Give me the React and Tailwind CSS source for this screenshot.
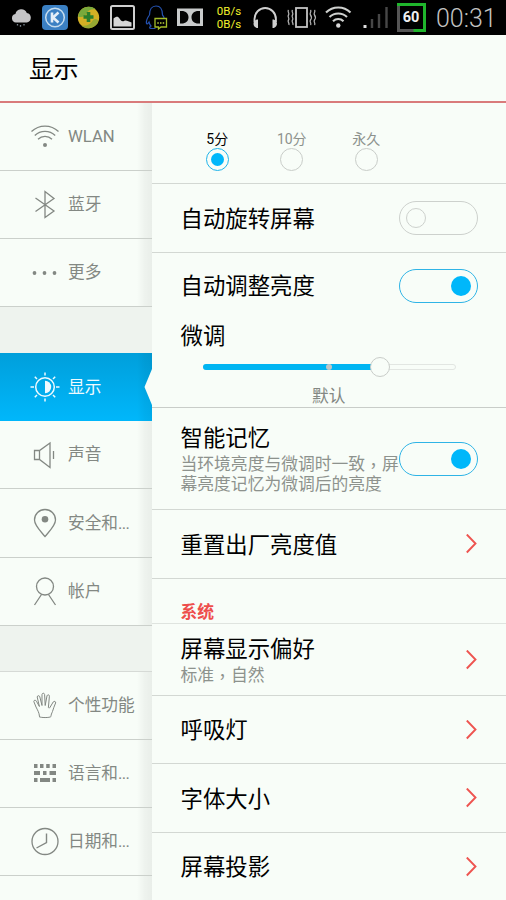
import React, { useState } from 'react';
import clsx from 'clsx';

// ─────────────────────────────────────────────
//  Status bar
// ─────────────────────────────────────────────
// Every glyph is drawn on the bar's own coordinates, the viewBox cuts out its cell
const Cell = ({ x, w, children }) => (
  <svg width={w} height="35" viewBox={`${x} 0 ${w} 35`} fill="none" className="shrink-0">
    {children}
  </svg>
);

const StatusBar = () => (
  <div className="h-[35px] bg-black flex items-center overflow-hidden">
    <Cell x={0} w={37}>
      <path d="M16 22.5a4.3 4.3 0 0 1-.6-8.5 6 6 0 0 1 11.4-1.1 4.9 4.9 0 0 1 .2 9.600z" fill="#c4c4c6" />
      <path d="M17.5 24v1.6M20.5 25v1.8M24 24v1.6" stroke="#7c8791" strokeWidth="1.3" />
    </Cell>
    <Cell x={37} w={36}>
      <rect x="42" y="5" width="26" height="25" rx="4" fill="#3b80c3" />
      <circle cx="55" cy="17.5" r="9.3" stroke="#c5dcee" strokeWidth="1.5" />
      <path d="M52 12.5v10M58.500 12.500l-5.500 5 5.500 5" stroke="#e5eff8" strokeWidth="2.600" />
    </Cell>
    <Cell x={73} w={32}>
      <circle cx="88.500" cy="17.500" r="10.700" fill="#d4b025" />
      <path d="M79 13a10.700 10.700 0 0 1 17-3.500c-5-1-8 1-9.500 4s-4.500 4.500-8.500 3z" fill="#79a93c" />
      <path d="M98 22a10.700 10.700 0 0 1-17 3.500c5 1 9-1 11-4s3.500-3 6-1.500z" fill="#96a832" />
      <path d="M88.500 12v10M83.500 17h10" stroke="#2b7f2c" strokeWidth="3.600" />
    </Cell>
    <Cell x={105} w={35}>
      <rect x="111" y="6" width="23" height="23" rx="1.5" stroke="#cfcfcf" strokeWidth="2" />
      <path d="M113.500 26.500v-8c2.500-2 4.500-2.500 6 0 1.200 2 2.500 3.500 4.500 2.500 2.500-1.200 4 .5 7.500 1.500v4z" fill="#d6d6d6" />
    </Cell>
    <Cell x={140} w={32}>
      <path d="M149.500 15c0-5.500 2.500-9 6.500-9s6.500 3.500 6.500 9c1 1 1.500 2 1.800 3.500M149.500 15c-2 2.500-3.500 6-3 8.500.5 1 1.500 0 2.500-1.500.5 2 1 3 2 4-1.500.8-2.500 2.500 1 2.500h3.500" stroke="#2451b0" strokeWidth="1.200" />
      <path d="M155 18.500h11.500v8.500h-5.500l-2.500 2v-2H155z" stroke="#a4bd29" strokeWidth="1.300" />
      <path d="M157.300 23h1.500M160 23h1.500M162.700 23h1.500" stroke="#b9cf3a" strokeWidth="1.500" />
    </Cell>
    <Cell x={172} w={36}>
      <rect x="177" y="8.500" width="26" height="17.500" fill="#c9cbcc" />
      <path d="M180 11h1.500c4.500 0 7 2.500 7 6.300s-2.500 6.300-7 6.300H180zM200 11h-1.500c-4.500 0-7 2.500-7 6.300s2.500 6.300 7 6.300h1.500z" fill="#050505" />
    </Cell>
    <div className="w-[42px] shrink-0 text-center text-[11.500px] leading-[13px] text-[#f2f22c] font-['Roboto',sans-serif]">
      <div>0B/s</div>
      <div>0B/s</div>
    </div>
    <Cell x={250} w={32}>
      <path d="M254.500 22v-3a10.700 11 0 0 1 21.400 0V22" stroke="#cfcfcf" strokeWidth="1.900" />
      <path d="M258 19.500v8.500h-1.300c-2-.8-3.200-2.500-3.200-4.300s1.200-3.500 3.200-4.200zM272.500 19.500v8.500h1.300c2-.8 3.200-2.500 3.200-4.300s-1.200-3.500-3.200-4.200z" fill="#cfcfcf" />
    </Cell>
    <Cell x={282} w={40}>
      <rect x="296" y="8" width="11" height="19" stroke="#c4c4c4" strokeWidth="1.800" />
      <path d="M288.500 10c-1.500 2 1.500 3 0 5s1.500 3 0 5 1.500 3 .3 5M292.500 10c-1.500 2 1.500 3 0 5s1.500 3 0 5 1.500 3 .3 5M310.500 10c1.500 2-1.500 3 0 5s1.500 3 0 5 1.500 3 0 5M314.500 10c1.500 2-1.500 3 0 5s1.500 3 0 5 1.500 3 0 5" stroke="#b0b0b0" strokeWidth="1.300" />
    </Cell>
    <Cell x={322} w={34}>
      <path d="M326 12.500a17.500 17.500 0 0 1 24.500 0M329.500 17a12.500 12.500 0 0 1 17.500 0M333 21.200a7.500 7.500 0 0 1 10.500 0" stroke="#cfd1cf" strokeWidth="2.100" />
      <circle cx="338.300" cy="25.500" r="2.200" fill="#d8d8d8" />
    </Cell>
    <Cell x={356} w={37}>
      <path d="M363.500 25h3v3h-3z" fill="#dedede" />
      <path d="M372 19v9M379 14v14M386.500 7v21" stroke="#474747" strokeWidth="2.400" />
    </Cell>
    <div className="relative shrink-0">
      <Cell x={393} w={37}>
        <path d="M398.500 5V30.500H414" stroke="#555" strokeWidth="3" />
        <path d="M397 4.500H424.500V30.500H413.500" stroke="#1fb52c" strokeWidth="3" />
      </Cell>
      <span className="absolute inset-0 flex items-center justify-center pt-[1px] pr-[1px] text-[14.500px] font-bold text-[#f0f0f0] font-['Roboto',sans-serif]">
        60
      </span>
    </div>
    <span className="ml-[6px] pt-[2px] text-[25px] leading-[33px] text-[#c3c3c3] font-light font-['Roboto',sans-serif]">
      00:31
    </span>
  </div>
);

// ─────────────────────────────────────────────
//  Sidebar icons, 32x32, thin strokes
// ─────────────────────────────────────────────
const icons = {
  wlan: (
    <>
      <path d="M2.500 10.500a19.500 19.500 0 0 1 27 0M5.800 14.500a14.500 14.500 0 0 1 20.400 0M9 18.200a10 10 0 0 1 14 0" />
      <circle cx="16" cy="24" r="2" fill="currentColor" stroke="none" />
    </>
  ),
  bluetooth: <path d="M6.500 9L25 22 16 28.500V2.500L25 9.500 6.500 22.500" />,
  more: (
    <g fill="currentColor" stroke="none">
      <circle cx="5.500" cy="16" r="1.900" />
      <circle cx="15.500" cy="16" r="1.900" />
      <circle cx="25.500" cy="16" r="1.900" />
    </g>
  ),
  display: (
    <>
      <circle cx="16" cy="16" r="9.300" strokeWidth="1.500" />
      <path d="M16 9.800a6.200 6.200 0 0 1 0 12.400z" fill="currentColor" stroke="none" />
      <path d="M16 1.500v3M16 27.500v3M1.500 16h3.500M27 16h3.500M5.800 5.800l2.200 2.200M24 24l2.200 2.200M5.800 26.200L8 24M24 8l2.200-2.200" strokeWidth="1.500" />
    </>
  ),
  sound: <path d="M5.500 11.500h5L21 4v24.500L10.500 20.500h-5zM10.500 11.500v9M24.500 12v8" />,
  location: (
    <>
      <path d="M16 29.500C11.500 24 5.500 18.500 5.500 13a10.500 10.500 0 0 1 21 0c0 5.500-6 11-10.500 16.500z" />
      <circle cx="16" cy="12.300" r="3.300" fill="currentColor" stroke="none" />
    </>
  ),
  account: (
    <>
      <circle cx="16" cy="10.500" r="8.500" />
      <path d="M12.500 18.500L5.500 29M19.500 18.500l7 10.500" />
    </>
  ),
  hand: (
    <path d="M10.500 27.500c-.3-4-2-6.500-3.500-9.500l-2.200-5.500c0-1.500 2-1.800 2.600-.3l3 5.300-2.200-9.500c0-1.600 2.200-1.800 2.600-.2l2.200 8.700V5.500c.2-1.700 2.400-1.700 2.600 0l.6 11 1.800-9.700c.5-1.500 2.500-1.200 2.400.4l-1 11.300c.3.8 1 .8 1.500 0l3.300-5.500c1-1.300 3-.5 2.400 1-1.500 3-2 5.500-3.100 8.500-.8 2-1.500 3-1.500 5-.8 1.400-10.900 1.400-12 0z" strokeWidth="1" transform="translate(0 -1)" />
  ),
  keyboard: (
    <path
      d="M5 6h3.500v4H5zM11 6h3.500v4H11zM17.200 6h3.500v4h-3.500zM23.500 6H27v4h-3.500zM5 13h6v4H5zM14 13h3.500v4H14zM20.500 13H27v4h-6.500zM5 20h3.500v4H5zM11 20h10v4H11zM23.500 20H27v4h-3.500z"
      fill="currentColor"
      stroke="none"
    />
  ),
  clock: (
    <>
      <circle cx="16" cy="15.500" r="13" />
      <path d="M17.500 7.500v9L7.500 22" strokeWidth="1.400" />
    </>
  ),
};

const NavIcon = ({ name }) => (
  <svg width="32" height="32" viewBox="0 0 32 32" fill="none" stroke="currentColor" strokeWidth="1.300" className="shrink-0">
    {icons[name]}
  </svg>
);

const NavItem = ({ icon, label, size = 'h-[68px]', active, cut }) => (
  <div
    className={clsx(
      'relative flex items-center pl-[29px] gap-[7px] text-[16.700px] whitespace-nowrap shrink-0',
      size,
      active
        ? 'bg-linear-to-b from-[#009fdb] to-[#00b7fb] text-[#eefaff]'
        : 'border-b border-[#cbd0cb] text-[#838883]'
    )}
  >
    <NavIcon name={icon} />
    <span className="pt-px">
      {label}
      {cut && <span className="tracking-[-0.7px]">...</span>}
    </span>
    {/* edge shade cast by the main panel */}
    <div className="absolute inset-y-0 right-0 w-[15px] bg-linear-to-r from-black/0 via-black/4 to-black/6" />
    {active && (
      <svg width="8" height="36" viewBox="0 0 8 36" className="absolute right-0 top-[16px]">
        <path d="M8 0L.5 18 8 36z" fill="#f8fdf8" />
      </svg>
    )}
  </div>
);

const NavGap = ({ size }) => (
  <div className={clsx('bg-[#eef3ee] shrink-0', size)} />
);

// ─────────────────────────────────────────────
//  Main panel controls
// ─────────────────────────────────────────────
const Switch = ({ on, onClick }) => (
  <button
    onClick={onClick}
    className={clsx(
      'w-[79px] h-[34px] shrink-0 rounded-full flex items-center px-[6px]',
      on ? 'border-[1.5px] border-[#2fb4e6] justify-end' : 'border border-[#cdd1cd]'
    )}
  >
    <span className={clsx('w-5 h-5 rounded-full', on ? 'bg-[#00b7fa]' : 'border border-[#cdd1cd]')} />
  </button>
);

const Chevron = () => (
  <svg width="12" height="20" viewBox="0 0 12 20" fill="none" stroke="#ee5450" strokeWidth="1.900" className="shrink-0">
    <path d="M.8.500l8.700 9-8.700 9" />
  </svg>
);

const Row = ({ title, desc, size, children }) => (
  <div className={clsx('flex items-center justify-between pl-[28.500px] pr-[28px] border-b border-[#d3d8d3] shrink-0', size)}>
    <div className={desc ? '' : 'pt-px'}>
      <div className="text-[22.400px] leading-[30px]">{title}</div>
      {desc && <div className="text-[16.800px] leading-[20px] text-[#8d928d] whitespace-nowrap">{desc}</div>}
    </div>
    {children}
  </div>
);

// the TC face centres the comma in its full-width cell
const Comma = () => <span className="relative top-[2px] font-['Noto_Sans_CJK_TC',sans-serif]">，</span>;

const timeouts = ['5分', '10分', '永久'];

const App = () => {
  const [timeout, setTimeoutValue] = useState('5分');
  const [rotate, setRotate] = useState(false);
  const [autoBrightness, setAutoBrightness] = useState(true);
  const [memory, setMemory] = useState(true);
  const level = 70;

  return (
    <div className="w-[506px] h-[900px] flex flex-col overflow-hidden bg-[#f8fdf8] text-black font-['Roboto','Noto_Sans_CJK_SC',sans-serif]">
      <StatusBar />

      <header className="h-[68px] shrink-0 flex items-center pl-[29px] pt-[4px] border-b-2 border-[#d97b7b]">
        <h1 className="text-[24.800px]">显示</h1>
      </header>

      <div className="flex flex-1 min-h-0">
        <nav className="w-[152px] shrink-0 flex flex-col overflow-hidden">
          <NavItem icon="wlan" label="WLAN" />
          <NavItem icon="bluetooth" label="蓝牙" />
          <NavItem icon="more" label="更多" />
          <NavGap size="h-[46px]" />
          <NavItem icon="display" label="显示" active />
          <NavItem icon="sound" label="声音" />
          <NavItem icon="location" label="安全和" cut size="h-[69px]" />
          <NavItem icon="account" label="帐户" />
          <NavGap size="h-[46px] border-b border-[#d6dad6]" />
          <NavItem icon="hand" label="个性功能" />
          <NavItem icon="keyboard" label="语言和" cut />
          <NavItem icon="clock" label="日期和" cut />
          <div className="relative flex-1">
            <div className="absolute inset-y-0 right-0 w-[15px] bg-linear-to-r from-black/0 via-black/4 to-black/6" />
          </div>
        </nav>

        <main className="flex-1 min-w-0 flex flex-col overflow-hidden">
          {/* Screen timeout */}
          <div className="h-[81px] shrink-0 flex pl-[28px] pt-[27px] border-b border-[#d3d8d3]">
            {timeouts.map(item => (
              <button
                key={item}
                onClick={() => setTimeoutValue(item)}
                className="w-[74.500px] flex flex-col items-center text-[14px] leading-[18px]"
              >
                <span className={item === timeout ? 'text-black' : 'text-[#8d928d]'}>{item}</span>
                <span
                  className={clsx(
                    'w-[23px] h-[23px] rounded-full flex items-center justify-center',
                    item === timeout ? 'border-[1.5px] border-[#1fb4ea]' : 'border-[1.5px] border-[#c9cdc9]'
                  )}
                >
                  {item === timeout && <span className="w-[13px] h-[13px] rounded-full bg-[#00b7fa]" />}
                </span>
              </button>
            ))}
          </div>

          <Row title="自动旋转屏幕" size="h-[69px]">
            <Switch on={rotate} onClick={() => setRotate(!rotate)} />
          </Row>

          {/* Brightness */}
          <div className="h-[155px] shrink-0 pl-[28.500px] pr-[28px] border-b border-[#c9cdc9]">
            <div className="h-[66px] flex items-center justify-between text-[22.400px]">
              <span className="pt-px">自动调整亮度</span>
              <Switch on={autoBrightness} onClick={() => setAutoBrightness(!autoBrightness)} />
            </div>
            <div className="h-[33px] pt-px text-[22.400px] leading-8">微调</div>
            <div className="mx-[22px] h-[30px] flex items-center">
              <div className="relative flex-1 h-[6px] rounded-full border border-[#e2e6e2]">
                <div className="absolute -inset-y-px -left-px rounded-full bg-[#00b5f2]" style={{ width: `${level}%` }} />
                <div className="absolute left-1/2 -top-px -ml-[3px] w-[6px] h-[6px] rounded-full bg-[#c0c6c6]" />
                <div
                  className="absolute -top-[8px] -ml-[10px] w-5 h-5 rounded-full bg-[#f8fdf8] border border-[#c9cdc9]"
                  style={{ left: `${level}%` }}
                />
              </div>
            </div>
            <div className="-ml-px pt-[1px] text-center text-[16.700px] leading-[28px] text-[#838883]">默认</div>
          </div>

          <Row
            title="智能记忆"
            size="h-[102px]"
            desc={<>当环境亮度与微调时一致<Comma />屏<br />幕亮度记忆为微调后的亮度</>}
          >
            <Switch on={memory} onClick={() => setMemory(!memory)} />
          </Row>

          <Row title="重置出厂亮度值" size="h-[69px]"><Chevron /></Row>

          <div className="h-[45px] shrink-0 flex items-end pl-[28.500px] border-b border-[#dfe4df] text-[16.800px] leading-[21px] font-bold text-[#ee4f4c]">
            系统
          </div>

          <Row title="屏幕显示偏好" desc={<>标准<Comma />自然</>} size="h-[72px]"><Chevron /></Row>
          <Row title="呼吸灯" size="h-[68px]"><Chevron /></Row>
          <Row title="字体大小" size="h-[69px]"><Chevron /></Row>
          <Row title="屏幕投影" size="h-[68px]"><Chevron /></Row>
        </main>
      </div>
    </div>
  );
};

export default App;
